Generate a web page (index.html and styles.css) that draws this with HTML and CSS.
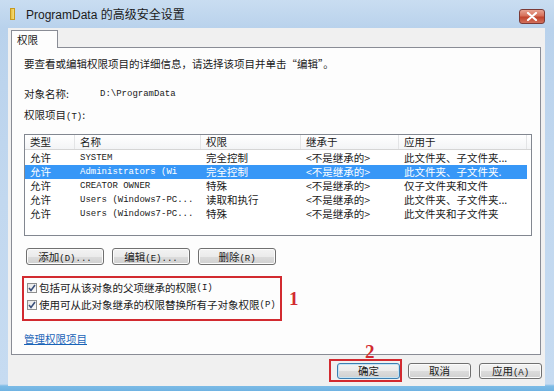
FILE: index.html
```html
<!DOCTYPE html>
<html lang="zh-CN">
<head>
<meta charset="utf-8">
<title>ProgramData 的高级安全设置</title>
<link rel="stylesheet" href="styles.css">
</head>
<body>
<div class="window">
  <div class="titlebar">
    <div class="folder"></div>
    <div class="title">ProgramData 的高级安全设置</div>
    <div class="close">
      <svg width="12" height="9" viewBox="0 0 12 9"><path d="M2 1 L10 8 M10 1 L2 8" stroke="#fff" stroke-width="2.2" stroke-linecap="round"/></svg>
    </div>
  </div>
  <div class="client">
    <div class="tabs"><div class="tab">权限</div></div>
    <div class="panel">
      <p class="intro">要查看或编辑权限项目的详细信息，请选择该项目并单击“编辑”。</p>
      <div class="objrow"><span class="objlabel">对象名称:</span><span class="mono">D:\ProgramData</span></div>
      <div class="label">权限项目<span class="mono">(T)</span>:</div>
      <div class="list">
        <div class="row head">
          <div class="c c1">类型</div><div class="c c2">名称</div><div class="c c3">权限</div><div class="c c4">继承于</div><div class="c c5">应用于</div><div class="c c6"></div>
        </div>
        <div class="row"><div class="c c1">允许</div><div class="c c2 mono">SYSTEM</div><div class="c c3">完全控制</div><div class="c c4">&lt;不是继承的&gt;</div><div class="c c5">此文件夹、子文件夹...</div></div>
        <div class="row sel"><div class="c c1">允许</div><div class="c c2 mono">Administrators (Wi</div><div class="c c3">完全控制</div><div class="c c4">&lt;不是继承的&gt;</div><div class="c c5">此文件夹、子文件夹.</div></div>
        <div class="row"><div class="c c1">允许</div><div class="c c2 mono">CREATOR OWNER</div><div class="c c3">特殊</div><div class="c c4">&lt;不是继承的&gt;</div><div class="c c5">仅子文件夹和文件</div></div>
        <div class="row"><div class="c c1">允许</div><div class="c c2 mono">Users (Windows7-PC...</div><div class="c c3">读取和执行</div><div class="c c4">&lt;不是继承的&gt;</div><div class="c c5">此文件夹、子文件夹...</div></div>
        <div class="row"><div class="c c1">允许</div><div class="c c2 mono">Users (Windows7-PC...</div><div class="c c3">特殊</div><div class="c c4">&lt;不是继承的&gt;</div><div class="c c5">此文件夹和子文件夹</div></div>
      </div>
      <div class="btnrow">
        <div class="btn">添加<span class="mono">(D)...</span></div>
        <div class="btn">编辑<span class="mono">(E)...</span></div>
        <div class="btn">删除<span class="mono">(R)</span></div>
      </div>
      <div class="annotrow">
        <div class="redbox">
          <div class="cbrow"><span class="cb"><svg width="8" height="8" viewBox="0 0 8 8"><path d="M1 4 L3 6.5 L7 1" fill="none" stroke="#3a4f7a" stroke-width="1.6"/></svg></span>包括可从该对象的父项继承的权限<span class="mono">(I)</span></div>
          <div class="cbrow"><span class="cb"><svg width="8" height="8" viewBox="0 0 8 8"><path d="M1 4 L3 6.5 L7 1" fill="none" stroke="#3a4f7a" stroke-width="1.6"/></svg></span>使用可从此对象继承的权限替换所有子对象权限<span class="mono">(P)</span></div>
        </div>
        <div class="num">1</div>
      </div>
      <div class="link">管理权限项目</div>
    </div>
    <div class="footer">
      <div class="hl"><div class="btn fbtn def">确定</div><div class="num num2">2</div></div>
      <div class="btn fbtn">取消</div>
      <div class="btn fbtn">应用<span class="mono">(A)</span></div>
    </div>
  </div>
</div>
</body>
</html>
```

FILE: styles.css
```css
html, body {
  margin: 0;
  padding: 0;
}
body {
  width: 554px;
  height: 391px;
  overflow: hidden;
  font-family: "Noto Sans CJK SC", "Liberation Sans", sans-serif;
  font-size: 10.5px;
  color: #1a1a1a;
}
.window {
  width: 554px;
  height: 391px;
  box-sizing: border-box;
  display: flex;
  flex-direction: column;
  background: linear-gradient(to bottom, #c9ddf1 0, #b9d2ec 28px, #c2d8ef 200px, #c6dbf1 384px, #7cbbe6 386px, #6fb3e2 391px);
}
.titlebar {
  height: 28px;
  flex: none;
  display: flex;
  align-items: flex-start;
  padding: 0 9px 0 10px;
}
.folder {
  width: 5px;
  height: 12px;
  margin-top: 8px;
  background: linear-gradient(to right, #e8c040, #f6dc7a);
  border: 1px solid #c79a1e;
  box-sizing: border-box;
}
.title {
  margin-left: 11px;
  line-height: 30px;
  font-size: 12px;
  font-family: "Liberation Sans", "Noto Sans CJK SC", sans-serif;
  color: #1b1b1b;
}
.close {
  margin-left: auto;
  margin-top: 9px;
  width: 26px;
  height: 15px;
  box-sizing: border-box;
  border: 1px solid #7b3a36;
  border-radius: 3px;
  background: linear-gradient(to bottom, #e8a493 0, #d6705a 45%, #c1442d 55%, #d2705c 100%);
  display: flex;
  align-items: center;
  justify-content: center;
}
.client {
  height: 358px;
  margin: 0 9px 0 8px;
  background: #f0f0f0;
  display: flex;
  flex-direction: column;
}
.tabs {
  height: 19px;
  flex: none;
  display: flex;
  align-items: flex-end;
  padding-left: 3px;
}
.tab {
  height: 18px;
  box-sizing: border-box;
  border: 1px solid #898c95;
  border-bottom: none;
  background: #fdfdfd;
  padding: 0 6px 0 5px;
  width: 47px;
  line-height: 17px;
  margin-bottom: -1px;
  position: relative;
  z-index: 1;
}
.panel {
  height: 308px;
  flex: none;
  box-sizing: border-box;
  margin: 0 4px 0 3px;
  border: 1px solid #898c95;
  background: #fdfdfd;
  padding: 9px 12px 0 12px;
}
.intro {
  margin: 0;
  line-height: 14px;
  white-space: nowrap;
}
.objrow {
  margin-top: 16px;
  line-height: 14px;
  display: flex;
}
.objlabel {
  width: 76px;
}
.mono {
  font-family: "Liberation Mono", monospace;
  font-size: 9px;
}
.label {
  margin-top: 7px;
  line-height: 14px;
}
.list {
  margin-top: 10px;
  height: 102px;
  box-sizing: border-box;
  border: 1px solid #828790;
  background: #fff;
  width: 508px;
}
.row {
  display: flex;
  height: 14px;
  line-height: 14px;
  width: 502px;
}
.row.head {
  height: 15px;
  line-height: 14px;
  margin-bottom: 1px;
  width: 506px;
  background: linear-gradient(to bottom, #ffffff, #f3f4f6);
  border-bottom: 1px solid #d5d5d5;
  box-sizing: border-box;
}
.head .c {
  border-right: 1px solid #e3e4e6;
  box-sizing: border-box;
}
.head .c6 {
  border-right: none;
  flex: 1;
}
.c {
  padding-left: 5px;
  white-space: nowrap;
  overflow-x: clip;
  flex: none;
  box-sizing: border-box;
}
.c1 { width: 50px; }
.c2 { width: 126px; }
.c3 { width: 100px; }
.c4 { width: 98px; }
.c5 { width: 128px; }
.row.sel {
  background: #3797f7;
  color: #fff;
}
.btnrow {
  margin-top: 12px;
  margin-left: 2px;
  display: flex;
  gap: 8px;
}
.btn {
  width: 78px;
  height: 17px;
  box-sizing: border-box;
  border: 1px solid #707070;
  border-radius: 3px;
  background: linear-gradient(to bottom, #f3f3f3 0, #ebebeb 50%, #dcdcdc 51%, #d0d0d0 100%);
  box-shadow: inset 0 0 0 1px #fbfbfb;
  text-align: center;
  line-height: 15px;
  white-space: nowrap;
}
.annotrow {
  margin-top: 11px;
  margin-left: -2px;
  display: flex;
  align-items: center;
  gap: 7px;
}
.redbox {
  width: 260px;
  height: 45px;
  box-sizing: border-box;
  border: 2px solid #d22a30;
  padding: 3px 0 0 3px;
  display: flex;
  flex-direction: column;
  gap: 3px;
}
.cbrow {
  height: 14px;
  line-height: 14px;
  display: flex;
  align-items: center;
  white-space: nowrap;
}
.cb {
  width: 10px;
  height: 10px;
  flex: none;
  box-sizing: border-box;
  border: 1px solid #8e8f8f;
  background: linear-gradient(to bottom right, #e6e6e6, #fbfbfb);
  margin-right: 2px;
  display: flex;
  align-items: center;
  justify-content: center;
}
.num {
  font-family: "Liberation Serif", serif;
  font-weight: bold;
  font-size: 19px;
  color: #d22a30;
  line-height: 19px;
}
.link {
  margin-top: 11px;
  line-height: 14px;
  color: #1a64b8;
  text-decoration: underline;
}
.footer {
  flex: 1;
  display: flex;
  justify-content: flex-end;
  align-items: flex-start;
  padding: 4px 3px 0 0;
  gap: 6px;
}
.fbtn {
  width: 63px;
  height: 16px;
  line-height: 14px;
  margin-top: 4px;
}
.footer > .fbtn + .fbtn {
  margin-left: 2px;
}
.hl {
  position: relative;
  border: 2px solid #d22a30;
  padding: 2px 0 1px 6px;
}
.hl .fbtn {
  margin-top: 0;
}
.btn.def {
  border-color: #3c7fb1;
  box-shadow: inset 0 0 0 1px #c4e4f6;
}
.num2 {
  position: absolute;
  left: 34px;
  top: -19px;
}
```
